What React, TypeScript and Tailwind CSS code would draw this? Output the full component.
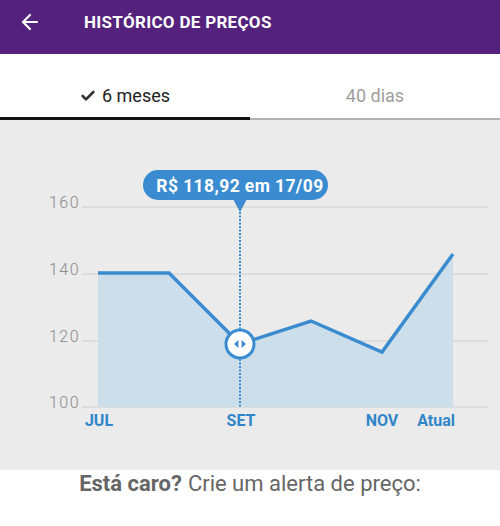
import { ArrowLeft, Check } from "lucide-react";

const GRID = [
  { label: "160", y: 87 },
  { label: "140", y: 154 },
  { label: "120", y: 221 },
  { label: "100", y: 287 },
];

const POINTS: [number, number][] = [
  [98, 153],
  [169, 153],
  [240, 224],
  [311, 201],
  [382, 232],
  [453, 134],
];

function PriceChart() {
  const line = POINTS.map((p) => p.join(",")).join(" ");
  const area = `98,287 ${line} 453,287`;
  return (
    <svg width={500} height={350} viewBox="0 0 500 350" className="block">
      {GRID.map((g) => (
        <g key={g.label}>
          <line x1={82} x2={488} y1={g.y} y2={g.y} stroke="#cfcfcf" strokeWidth={1} />
          <text
            x={80}
            y={g.y + 1}
            textAnchor="end"
            fontFamily="Roboto, sans-serif"
            fontWeight={300}
            fontSize={16}
            letterSpacing={1.5}
            fill="#8a8a8a"
          >
            {g.label}
          </text>
        </g>
      ))}
      <polygon points={area} fill="#cddeeb" />
      <polyline points={line} fill="none" stroke="#3a8bcf" strokeWidth={3.5} strokeLinejoin="miter" />

      {/* marker */}
      <line x1={240} x2={240} y1={92} y2={287} stroke="#3a8bcf" strokeWidth={2} strokeDasharray="2 1.5" />
      <rect x={143} y={50} width={185} height={30} rx={15} fill="#3a8bcf" />
      <polygon points="233,79 247,79 240,92" fill="#3a8bcf" />
      <text
        x={240}
        y={72}
        textAnchor="middle"
        fontFamily="Roboto, sans-serif"
        fontWeight={700}
        fontSize={17.5}
        letterSpacing={0.4}
        fill="#fff"
      >
        R$ 118,92 em 17/09
      </text>
      <circle cx={240} cy={224} r={14} fill="#fff" stroke="#3a8bcf" strokeWidth={3} />
      <polygon points="238.5,220 238.5,228 234,224" fill="#3a8bcf" />
      <polygon points="241.5,220 241.5,228 246,224" fill="#3a8bcf" />

      {[
        { t: "JUL", x: 99, a: "middle" },
        { t: "SET", x: 241, a: "middle" },
        { t: "NOV", x: 382, a: "middle" },
        { t: "Atual", x: 455, a: "end" },
      ].map((l) => (
        <text
          key={l.t}
          x={l.x}
          y={306}
          textAnchor={l.a as "middle" | "end"}
          fontFamily="Roboto, sans-serif"
          fontWeight={700}
          fontSize={16}
          fill="#2f86c8"
        >
          {l.t}
        </text>
      ))}
    </svg>
  );
}

export default function App() {
  return (
    <div className="w-[500px] h-[526px] overflow-hidden bg-white flex flex-col font-['Roboto',sans-serif]">
      {/* Header */}
      <div className="h-[54px] shrink-0 bg-[#54227c] flex items-start pt-[10px]">
        <ArrowLeft size={24} strokeWidth={2.2} color="#fff" className="ml-[18px]" />
        <span className="ml-[42px] text-white text-[17px] font-bold leading-[24px] tracking-[0.3px]">
          HISTÓRICO DE PREÇOS
        </span>
      </div>

      {/* Tabs */}
      <div className="flex h-[66px] shrink-0">
        <div className="flex-1 flex flex-col">
          <div className="flex-1 flex items-center justify-center gap-[6px] text-[18px] text-[#222] pt-[20px]">
            <Check size={16} strokeWidth={4} color="#333" />
            <span>6 meses</span>
          </div>
          <div className="h-[3px] bg-[#111]" />
        </div>
        <div className="flex-1 flex flex-col">
          <div className="flex-1 flex items-center justify-center text-[18px] text-[#9e9e9e] pt-[20px]">
            40 dias
          </div>
          <div className="h-[3px] flex flex-col justify-end">
            <div className="h-[2px] bg-[#b0b3b3]" />
          </div>
        </div>
      </div>

      {/* Chart */}
      <div className="h-[350px] shrink-0 bg-[#ebebeb]">
        <PriceChart />
      </div>

      {/* Footer */}
      <div className="flex-1 flex items-start justify-center text-[22px] leading-[26px] text-[#666] pt-[1px]">
        <span className="font-bold">Está caro?</span>
        <span className="ml-[6px]">Crie um alerta de preço:</span>
      </div>
    </div>
  );
}
